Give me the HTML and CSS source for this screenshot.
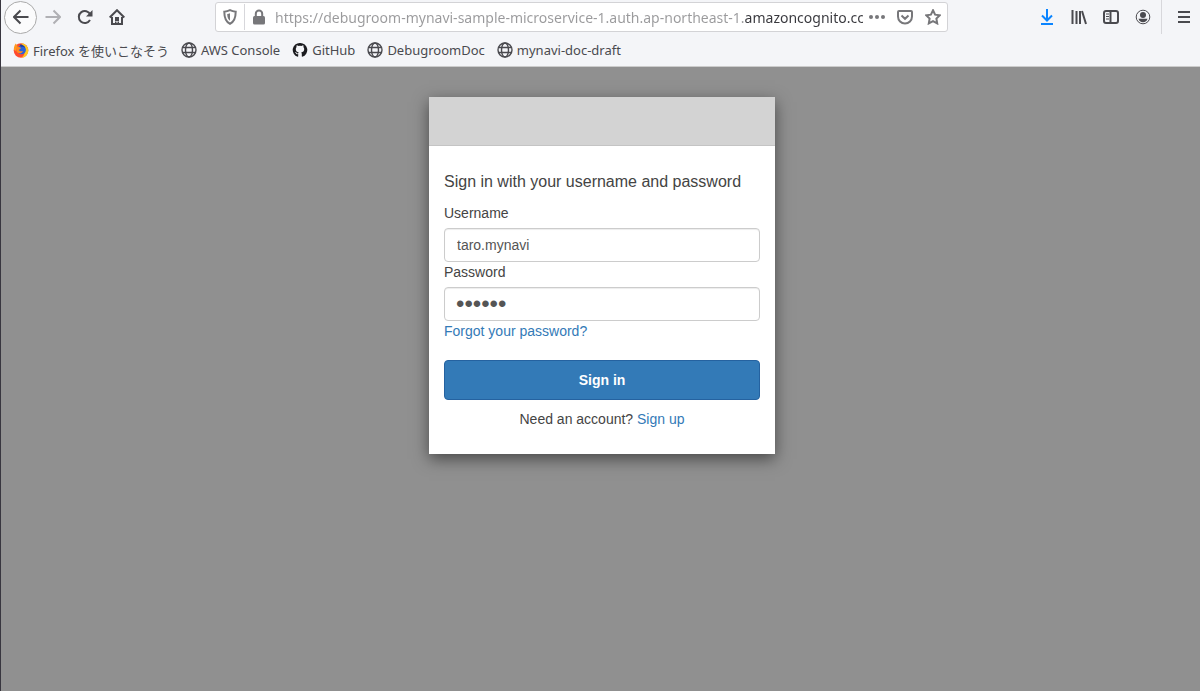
FILE: index.html
```html
<!DOCTYPE html>
<html lang="ja">
<head>
    <meta charset="UTF-8">
    <meta name="viewport" content="width=device-width, initial-scale=1">
    <title>Signin</title>
    <link rel="stylesheet" href="styles.css">
</head>
<body>
    <header class="browser">
        <div class="toolbar">
            <div class="nav-buttons">
                <button type="button" class="back" aria-label="Back">
                    <svg viewBox="0 0 16 16"><path d="M15.500 8H1M7.500 1.500L1 8l6.500 6.500"/></svg>
                </button>
                <button type="button" class="forward" aria-label="Forward">
                    <svg viewBox="0 0 16 16"><path d="M.5 8H15M8.500 1.500L15 8l-6.500 6.500"/></svg>
                </button>
                <button type="button" aria-label="Reload">
                    <svg viewBox="0 0 16 16"><path d="M13 11a6 6 0 1 1 .3-5.500"/><path class="solid" d="M15.500 1v6.500H9z"/></svg>
                </button>
                <button type="button" aria-label="Home">
                    <svg viewBox="0 0 16 16"><path d="M.7 8.500L8 1.200l7.300 7.300M3 8v7h10V8"/><path class="solid" d="M6 8h4v4H6zM6 12.500h1.500V15H6zM8.500 12.500H10V15H8.500z"/></svg>
                </button>
            </div>

            <div class="urlbar">
                <svg class="shield" viewBox="0 0 16 16"><path d="M8 1.200c2 1 3.800 1.400 5.700 1.500 0 6-1 9.800-5.700 12.100C3.300 12.500 2.300 8.700 2.300 2.700 4.200 2.600 6 2.200 8 1.200z"/><path class="solid" d="M8 4.200v7.600C6 10.300 5.300 8.300 5.200 5.100 6.200 5 7 4.700 8 4.200z"/></svg>
                <span class="separator"></span>
                <svg class="lock" viewBox="0 0 16 16"><path d="M4.800 8V4.700a3.200 3.200 0 0 1 6.400 0V8"/><rect class="solid" x="2" y="7" width="12" height="8.500" rx="1.500"/></svg>
                <input class="url" type="text" aria-label="URL" value="https://debugroom-mynavi-sample-microservice-1.auth.ap-northeast-1.amazoncognito.cc">
                <button type="button" aria-label="Page actions">
                    <svg viewBox="0 0 16 16"><g class="solid"><circle cx="2" cy="8" r="2"/><circle cx="8" cy="8" r="2"/><circle cx="14" cy="8" r="2"/></g></svg>
                </button>
                <button type="button" aria-label="Pocket">
                    <svg viewBox="0 0 16 16"><path d="M2 2h12a1 1 0 0 1 1 1v4.500a7 7 0 0 1-14 0V3a1 1 0 0 1 1-1zM4.500 6.500L8 9.800l3.500-3.300"/></svg>
                </button>
                <button type="button" aria-label="Bookmark this page">
                    <svg viewBox="0 0 16 16"><path d="M8 1.300l2.100 4.400 4.700.6-3.400 3.300.8 4.800L8 12.100l-4.200 2.300.8-4.800L1.200 6.300l4.700-.6z"/></svg>
                </button>
            </div>

            <div class="tools">
                <button type="button" class="download" aria-label="Downloads">
                    <svg viewBox="0 0 16 16"><path d="M8 0v11M3 6.500l5 5 5-5M2 15h12"/></svg>
                </button>
                <button type="button" aria-label="Library">
                    <svg viewBox="0 0 16 16"><path d="M1.500 1v14M5.500 2v13M9 2v13M11 2l4 13"/></svg>
                </button>
                <button type="button" aria-label="Sidebars">
                    <svg viewBox="0 0 16 16"><rect x="1" y="2" width="14" height="12" rx="2"/><path d="M7.500 2v12"/><path class="thin" d="M3 5h3M3 7.500h3M3 10h3"/></svg>
                </button>
                <button type="button" aria-label="Account">
                    <svg viewBox="0 0 16 16"><circle class="thin" cx="8" cy="8" r="6.800"/><circle class="solid" cx="8" cy="6" r="3"/><path class="solid" d="M3.500 9.800h9C12 12 10.300 13.300 8 13.300S4 12 3.500 9.800z"/></svg>
                </button>
                <span class="separator"></span>
                <button type="button" aria-label="Menu">
                    <svg viewBox="0 0 16 16"><path d="M2 3h12M2 8h12M2 13h12"/></svg>
                </button>
            </div>
        </div>

        <nav class="bookmarks">
            <a href="#">
                <svg viewBox="0 0 16 16">
                    <circle cx="8" cy="8.500" r="7.300" fill="#ff4a2e"/>
                    <path d="M8 1.200c4 .2 7.300 3 7.300 7.300 0 4-3 7.200-7 7.300C13 13 13 6 8 1.200z" fill="#ffc91f"/>
                    <path d="M1 8C.8 5 1.500 3 2.800 1.500L4.500 4 3 9z" fill="#ff9a1f"/>
                    <circle cx="8.500" cy="7.800" r="4.400" fill="#2a62d8"/>
                    <path d="M3.500 5c2-.6 3.500 0 4.500 1.200L5.800 8c1 1.500 2.500 1.600 4.200.9-1 3-5 3.200-6.500.6z" fill="#ff8a1f"/>
                    <path d="M6.500 2.500c2.500-.5 5 1 5.800 3.500-1.500-1.200-2.800-1.500-4.300-1z" fill="#1f3d9c"/>
                </svg>
                Firefox を使いこなそう
            </a>
            <a href="#">
                <svg viewBox="0 0 16 16"><circle cx="8" cy="8" r="7"/><ellipse cx="8" cy="8" rx="3.500" ry="7"/><path d="M1.500 5.500h13M1.500 10.500h13"/></svg>
                AWS Console
            </a>
            <a href="#">
                <svg class="github" viewBox="0 0 16 16"><path d="M8 1a7 7 0 0 0-2.300 13.700c.4 0 .5-.2.500-.4v-2.200c-.9.200-2 0-2.300-.9-.3-.7-.6-1-1-1.200.9-.3 1.500.3 1.800.9.400.6 1 .7 1.600.4.100-.4.300-.7.500-.9-1.800-.2-3-1-3-3.300 0-.8.300-1.500.8-2-.2-.6-.1-1.300.1-1.900.7 0 1.300.4 1.900.8a7 7 0 0 1 2.800 0c.6-.4 1.200-.8 1.900-.8.200.6.300 1.300.1 1.900.5.500.8 1.200.8 2 0 2.300-1.200 3.100-3 3.300.4.400.6.900.6 1.600v2.300c0 .2.100.4.500.4A7 7 0 0 0 8 1z"/></svg>
                GitHub
            </a>
            <a href="#">
                <svg viewBox="0 0 16 16"><circle cx="8" cy="8" r="7"/><ellipse cx="8" cy="8" rx="3.500" ry="7"/><path d="M1.500 5.500h13M1.500 10.500h13"/></svg>
                DebugroomDoc
            </a>
            <a href="#">
                <svg viewBox="0 0 16 16"><circle cx="8" cy="8" r="7"/><ellipse cx="8" cy="8" rx="3.500" ry="7"/><path d="M1.500 5.500h13M1.500 10.500h13"/></svg>
                mynavi-doc-draft
            </a>
        </nav>
    </header>

    <main class="page">
        <div class="modal">
            <div class="banner"></div>
            <form class="signin">
                <h1>Sign in with your username and password</h1>
                <label for="username">Username</label>
                <input id="username" name="username" type="text" value="taro.mynavi">
                <label for="password">Password</label>
                <input id="password" name="password" type="password" value="mynavi">
                <a href="#">Forgot your password?</a>
                <button type="submit">Sign in</button>
                <p>Need an account? <a href="#">Sign up</a></p>
            </form>
        </div>
    </main>
</body>
</html>
```
FILE: styles.css
```css
* {
    box-sizing: border-box;
}

body {
    display: flex;
    flex-direction: column;
    min-height: 100vh;
    margin: 0;
    border-left: 1px solid #38363f;
    background-color: #909090;
}

/******************* browser *******************/

.browser {
    border-bottom: 1px solid #ccc;
    background-color: #f4f5f8;
    color: #4a4a4f;
    font-family: "Noto Sans", "Noto Sans CJK JP", sans-serif;
    font-size: 13px;
}

.browser svg {
    display: block;
    flex: none;
    width: 16px;
    height: 16px;
    fill: none;
    stroke: currentColor;
    stroke-width: 2;
}

.browser .solid {
    fill: currentColor;
    stroke: none;
}

.browser .thin {
    stroke-width: 1;
}

.browser button {
    display: flex;
    align-items: center;
    justify-content: center;
    flex: none;
    width: 32px;
    height: 32px;
    padding: 0;
    border: 0;
    background: none;
    color: inherit;
}

.toolbar {
    display: flex;
    align-items: center;
    height: 34px;
    padding-left: 3px;
}

.nav-buttons {
    display: flex;
    align-items: center;
    flex: none;
    width: 211px;
}

.browser .back {
    width: 33px;
    height: 33px;
    border: 1px solid #aaa;
    border-radius: 50%;
    background-color: #fbfbfc;
}

.browser .forward {
    color: #b0b0b4;
}

.urlbar {
    display: flex;
    align-items: center;
    flex: 1;
    min-width: 0;
    height: 30px;
    padding-left: 6px;
    border: 1px solid #d3d3d6;
    border-radius: 3px;
    background-color: #fff;
    color: #77777a;
}

.separator {
    flex: none;
    width: 1px;
    height: 26px;
    background-color: #d7d7db;
}

.urlbar .shield {
    margin-right: 6px;
}

.urlbar .lock {
    margin: 0 8px 0 6px;
}

.urlbar button {
    width: 28px;
    height: 28px;
}

/* the domain is darker than the rest of the address */
.url {
    flex: 1;
    min-width: 0;
    padding: 0;
    border: 0;
    outline: 0;
    background: linear-gradient(to right, #9a9a9c 470px, #38383d 470px);
    -webkit-background-clip: text;
    background-clip: text;
    color: transparent;
    font-family: inherit;
    font-size: 14px;
}

.tools {
    display: flex;
    align-items: center;
    flex: none;
    margin-left: 83px;
}

.tools .separator {
    height: 34px;
    margin: 0 6px 0 2px;
}

.browser .download {
    color: #0a84ff;
}

/* bookmarks bar */
.bookmarks {
    display: flex;
    gap: 12px;
    height: 32px;
    padding: 0 12px;
    white-space: nowrap;
}

.bookmarks a {
    display: flex;
    align-items: center;
    gap: 4px;
    color: inherit;
    text-decoration: none;
}

.bookmarks a svg {
    stroke-width: 1.4;
}

.bookmarks svg [fill] {
    stroke: none;
}

.bookmarks .github {
    fill: #1b1b1f;
    stroke: none;
}

/******************* sign in *******************/

.page {
    flex: 1;
    padding: 30px 0 30px 3px;
    color: #444;
    font-family: "Liberation Sans", Arial, sans-serif;
    font-size: 14px;
    line-height: 20px;
}

.modal {
    max-width: 346px;
    margin: 0 auto;
    background-color: #fff;
    box-shadow: 0 5px 15px rgba(0, 0, 0, 0.5);
}

.banner {
    height: 49px;
    border-bottom: 1px solid #c4c4c4;
    background-color: #d3d3d3;
}

.signin {
    padding: 25px 15px;
}

.signin h1 {
    margin: 0 0 10px;
    font-size: 16px;
    font-weight: normal;
    line-height: 22px;
}

.signin label {
    display: block;
    margin-bottom: 5px;
}

.signin input {
    display: block;
    width: 100%;
    height: 34px;
    padding: 0 12px;
    border: 1px solid #ccc;
    border-radius: 4px;
    background-color: #fff;
    box-shadow: inset 0 1px 1px rgba(0, 0, 0, 0.075);
    color: #555;
    font: inherit;
}

/* larger bullets */
.signin input[type=password] {
    padding: 0 11px;
    font-size: 24px;
}

.signin a {
    color: #337ab7;
    text-decoration: none;
}

.signin button {
    display: block;
    width: 100%;
    height: 40px;
    margin: 19px 0 9px;
    border: 1px solid #2562a0;
    border-radius: 4px;
    background-color: #337ab7;
    color: #fff;
    font: inherit;
    font-weight: bold;
}

.signin p {
    margin: 0;
    text-align: center;
}
```
